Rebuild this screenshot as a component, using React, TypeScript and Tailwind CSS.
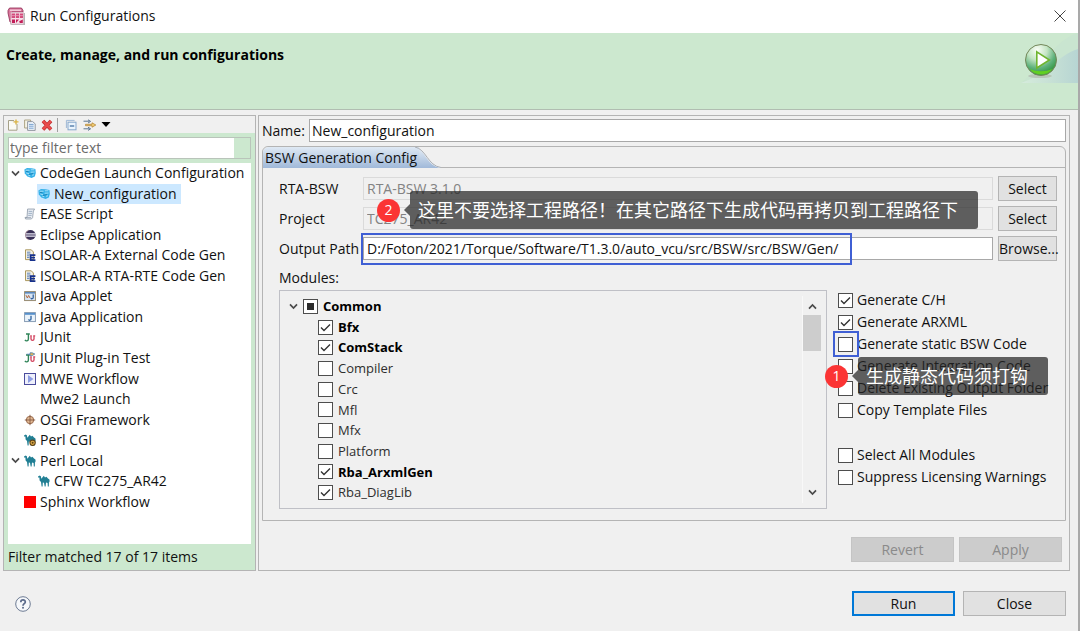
import { useState } from "react";
import type { ReactNode } from "react";
import clsx from "clsx";

function Chevron({ className }: { className?: string }) {
  return (
    <svg viewBox="0 0 9 7" className={clsx("h-[7px] w-[9px] shrink-0", className)}>
      <path d="M1 1.4 4.5 5 8 1.4" fill="none" stroke="#4a4a4a" strokeWidth="1.7" />
    </svg>
  );
}

function AppIcon() {
  return (
    <svg viewBox="0 0 19 19" className="size-[19px]">
      <path d="M3 6V16a2 2 0 0 0 2 2H18V6Z" fill="#b9b2b5" />
      <path d="M1 3.5 2.5 1H14.5L16 3.5V5H5V14L3 15 1 6Z" fill="#d9779c" stroke="#8d2850" strokeWidth="0.8" />
      <path d="M3 2.5H14V4H3Z" fill="#f3c9d8" />
      <rect x="4" y="5.5" width="12.5" height="11.5" fill="#f6dfe8" stroke="#d6b9c5" strokeWidth="0.7" />
      <path d="M4.6 6.6H8V11H4.6ZM8.8 6.6H12V11H8.8ZM12.8 6.6H16V11H12.8Z" fill="#d34b7c" />
      <path d="M4.6 8.6H16" stroke="#eda9c2" strokeWidth="0.7" />
      <path d="M5 12.4H8V16H5ZM9 12.4H12L9 16ZM12.2 14.2 15.8 12.4V16H12.8Z" fill="#c21d57" />
    </svg>
  );
}

function CodeGenIcon() {
  return (
    <svg viewBox="0 0 12 12" className="size-3">
      <path d="M.4 2.6 3 1l4.6.2L11.4 2l.4 4-1 3.6L7.6 11 3.4 9.4.8 6.6Z" fill="#35b1e8" />
      <path d="M1.6 3.2h4M6.8 2.8h3.6M2.2 5.8l2.8 1M6.6 5.2l4-.2M4.4 8.6h1.8M8 8.2l2-.4" fill="none" stroke="#b4e5f9" strokeWidth="0.9" />
      <path d="M5 7.4 9 6.6M2 4.6h2.4" stroke="#1676a9" strokeWidth="0.8" />
    </svg>
  );
}

function ScriptIcon() {
  return (
    <svg viewBox="0 0 12 12" className="size-3">
      <path d="M3.6 1h7L9.4 3 8.6 9.6 7.4 11H1.6L1 9.4h2Z" fill="#e8ecf2" stroke="#8e99a8" strokeWidth="0.8" />
      <path d="M4.6 3.4h3.6M4.4 5.4H8M4.2 7.4h3.4" stroke="#8fa3bd" strokeWidth="0.8" />
      <path d="M1.4 9.6H7" stroke="#8e99a8" strokeWidth="0.7" />
    </svg>
  );
}

function EclipseIcon() {
  return (
    <svg viewBox="0 0 12 12" className="size-3">
      <ellipse cx="6.4" cy="6" rx="5.2" ry="4.9" fill="#3a3158" />
      <path d="M4.6 1.3C.6 2.6.6 9.4 4.6 10.7" fill="none" stroke="#b08a8f" strokeWidth="0.7" />
      <path d="M1.6 4.9h9.8M1.6 7.1h9.8" stroke="#e8e6f2" strokeWidth="1.1" />
    </svg>
  );
}

function IsolarIcon() {
  return (
    <svg viewBox="0 0 12 12" className="size-3">
      <path d="M1.5.8h5.8L9.4 3v7.6H1.5Z" fill="#f4f1e4" stroke="#a38d4e" strokeWidth="0.9" />
      <path d="M3 3.2h3.4M3 5h3.4M3 6.8h2.4M3 8.6h2.4" stroke="#4f79b9" strokeWidth="0.9" />
      <path d="M11.4 6.2H6.6v5h4.8M6.6 8.7h4.4" fill="none" stroke="#16308c" strokeWidth="1.7" />
    </svg>
  );
}

function AppletIcon() {
  return (
    <svg viewBox="0 0 12 12" className="size-3">
      <rect x=".6" y="1.6" width="10.8" height="9" fill="#d7e6f5" stroke="#8f8163" strokeWidth="0.9" />
      <path d="M1 2h10v1.6H1Z" fill="#5b88bd" />
      <path d="M2 5.2 3.4 8 4.6 5.4 6 8" fill="none" stroke="#b7683c" strokeWidth="1" />
      <path d="M9.2 4.6v3c0 1.4-1.8 1.5-2.4.6" fill="none" stroke="#2a5795" strokeWidth="1.2" />
    </svg>
  );
}

function JavaAppIcon() {
  return (
    <svg viewBox="0 0 12 12" className="size-3">
      <rect x=".6" y="1.6" width="10.8" height="9" fill="#eaf3fb" stroke="#7d93ad" strokeWidth="0.9" />
      <path d="M1 2h10v1.8H1Z" fill="#5690cc" />
      <path d="M7 4.8v3.2c0 1.5-2 1.6-2.6.5" fill="none" stroke="#2a5f9e" strokeWidth="1.3" />
    </svg>
  );
}

function JUnitIcon({ plugin = false }: { plugin?: boolean }) {
  return (
    <svg viewBox="0 0 12 12" className="size-3">
      <path d="M2 3h2.4v5c0 2.2-2.6 2.4-3.4.9M3 3h2.8" fill="none" stroke="#2f8458" strokeWidth="1.4" />
      <path d="M7 4.6v3.4c0 1.9 3 1.9 3 0V4.6M6.2 4.8h1.6M9.2 4.8h2" fill="none" stroke="#d2425d" strokeWidth="1.3" />
      {plugin && (
        <path d="M2.6 2.2H6M6 .8h2.2L10.8 2 8.2 3.6H6Z" fill="#e2b552" stroke="#4d7fb6" strokeWidth="0.8" />
      )}
    </svg>
  );
}

function MweIcon() {
  return (
    <svg viewBox="0 0 12 12" className="size-3">
      <rect x=".5" y=".5" width="11" height="11" fill="#eef0fb" stroke="#4a4c9c" />
      <path d="M4 2 9.4 6 4 10Z" fill="#8d9de2" />
    </svg>
  );
}

function OsgiIcon() {
  return (
    <svg viewBox="0 0 12 12" className="size-3">
      <circle cx="6" cy="6" r="3.7" fill="#e6bd96" stroke="#97694c" />
      <path d="M6 .8v10.4M.8 6h10.4" stroke="#8a5f47" strokeWidth="1" />
    </svg>
  );
}

function CamelIcon({ cgi = false }: { cgi?: boolean }) {
  return (
    <svg viewBox="0 0 12 12" className="size-3">
      <path
        d="M0 1.4 1.8.6 3 1.4l.2 2.4 1.4-1.6L5.8.8l1.2 1.6L8.4 1.8 10 3.4l1.4 1.2.4 3-.8-1.4-.2 5.4h-1L9.6 8 8 7.4l-.4 4.2H6.7L6 7.8 4.8 7.4l-.2 4.2h-1L3 7 1.6 5.4 1.4 2.6 0 2.6Z"
        fill="#217f94"
      />
      {cgi && (
        <>
          <circle cx="8.6" cy="8.8" r="2.7" fill="#e0ae48" stroke="#5f4319" strokeWidth="1.1" />
          <circle cx="8.6" cy="8.8" r="1" fill="#5f4319" />
        </>
      )}
    </svg>
  );
}

function RunBanner() {
  return (
    <svg viewBox="0 0 58 50" className="h-[50px] w-[58px]">
      <defs>
        <linearGradient id="sweep" x1="0" x2="1">
          <stop offset="0" stopColor="#d6ecdc" />
          <stop offset="0.55" stopColor="#c6e0d5" />
          <stop offset="1" stopColor="#b7d5d3" />
        </linearGradient>
        <radialGradient id="ball" cx="0.38" cy="0.18" r="0.9">
          <stop offset="0" stopColor="#fbfef8" />
          <stop offset="0.35" stopColor="#c4e5c4" />
          <stop offset="0.65" stopColor="#5fb27c" />
          <stop offset="0.85" stopColor="#3a9a4a" />
          <stop offset="1" stopColor="#5cc327" />
        </radialGradient>
      </defs>
      <path d="M58 0C36 6 22 34 1 50H58Z" fill="#c9e5d0" />
      <path d="M58 16C38 22 30 40 1 50H58Z" fill="url(#sweep)" />
      <ellipse cx="20" cy="43" rx="12" ry="2" fill="#b9c6b9" />
      <circle cx="21" cy="27" r="15.5" fill="url(#ball)" stroke="#74875a" />
      <path d="M10 36c4 7 18 7 22 0-6 3-16 3-22 0Z" fill="#62cf22" />
      <path d="M16.8 18.8 29.4 27 16.8 35Z" fill="#fff" stroke="#6fb52f" strokeWidth="1.6" />
    </svg>
  );
}

const launchItems: { label: string; icon?: ReactNode; open?: boolean; child?: boolean; selected?: boolean }[] = [
  { label: "CodeGen Launch Configuration", icon: <CodeGenIcon />, open: true },
  { label: "New_configuration", icon: <CodeGenIcon />, child: true, selected: true },
  { label: "EASE Script", icon: <ScriptIcon /> },
  { label: "Eclipse Application", icon: <EclipseIcon /> },
  { label: "ISOLAR-A External Code Gen", icon: <IsolarIcon /> },
  { label: "ISOLAR-A RTA-RTE Code Gen", icon: <IsolarIcon /> },
  { label: "Java Applet", icon: <AppletIcon /> },
  { label: "Java Application", icon: <JavaAppIcon /> },
  { label: "JUnit", icon: <JUnitIcon /> },
  { label: "JUnit Plug-in Test", icon: <JUnitIcon plugin /> },
  { label: "MWE Workflow", icon: <MweIcon /> },
  { label: "Mwe2 Launch" },
  { label: "OSGi Framework", icon: <OsgiIcon /> },
  { label: "Perl CGI", icon: <CamelIcon cgi /> },
  { label: "Perl Local", icon: <CamelIcon />, open: true },
  { label: "CFW TC275_AR42", icon: <CamelIcon />, child: true },
  { label: "Sphinx Workflow", icon: <span className="size-3 bg-[#ff0000]" /> },
];

const modules = [
  { label: "Bfx", checked: true, bold: true },
  { label: "ComStack", checked: true, bold: true },
  { label: "Compiler" },
  { label: "Crc" },
  { label: "Mfl" },
  { label: "Mfx" },
  { label: "Platform" },
  { label: "Rba_ArxmlGen", checked: true, bold: true },
  { label: "Rba_DiagLib", checked: true },
];

function CheckBox({ id, checked = false, mixed = false }: { id: string; checked?: boolean; mixed?: boolean }) {
  const [on, setOn] = useState(checked);
  return (
    <span className="grid size-[15px] shrink-0">
      <input
        id={id}
        type="checkbox"
        checked={on}
        onChange={(e) => setOn(e.target.checked)}
        className="col-start-1 row-start-1 size-[15px] appearance-none border border-[#4d4d4d] bg-white"
      />
      <svg viewBox="0 0 15 15" className="pointer-events-none col-start-1 row-start-1 size-[15px]">
        {mixed && <rect x="4" y="4" width="7" height="7" fill="#2b2b2b" />}
        {!mixed && on && <path d="M3 7.5 6 10.5 12 4.5" fill="none" stroke="#333" strokeWidth="1.4" />}
      </svg>
    </span>
  );
}

function Option({ id, label, checked, children }: { id: string; label: string; checked?: boolean; children?: ReactNode }) {
  return (
    <div className="relative flex h-[22px] items-center gap-1 whitespace-nowrap">
      <CheckBox id={id} checked={checked} />
      <label htmlFor={id}>{label}</label>
      {children}
    </div>
  );
}

function Callout({ num, text, className }: { num: number; text: string; className: string }) {
  return (
    <div className={clsx("pointer-events-none absolute z-10 flex items-center", className)}>
      <span className="flex size-[23px] items-center justify-center rounded-full bg-[#fb3434] text-sm text-white">
        {num}
      </span>
      <svg viewBox="0 0 6 12" className="ml-1 h-3 w-[6px]">
        <path d="M6 0V12L0 6Z" fill="#262626" fillOpacity="0.72" />
      </svg>
      <span className="rounded-[3px] bg-[#262626]/72 py-1 pr-5 pl-2 text-lg leading-[30px] whitespace-nowrap text-white">
        {text}
      </span>
    </div>
  );
}

function Toolbar() {
  return (
    <div className="flex h-[17px] items-center bg-[#f0f0f0] pl-[3px]">
      <button aria-label="New" className="mr-[5px]">
        <svg viewBox="0 0 12 12" className="size-3">
          <path d="M1.5 1.5H7M10 5v6.2H1.5V1.5" fill="#fbfbf6" stroke="#a6a188" />
          <path d="M9 .4v5M6.5 2.9h5" stroke="#dbb547" strokeWidth="1.4" />
        </svg>
      </button>
      <button aria-label="Duplicate" className="mr-[5px]">
        <svg viewBox="0 0 12 12" className="size-3">
          <path d="M.6 1h6v8h-6Z" fill="#f5f3e6" stroke="#a69c78" strokeWidth="0.9" />
          <path d="M3.6 2.6h5l2.6 2.2v6.6H3.6Z" fill="#eef4fb" stroke="#8a8f98" strokeWidth="0.9" />
          <path d="M5 5.4h4.6M5 7.2h4.6M5 9.2h4.6" stroke="#6b98c9" strokeWidth="0.9" />
        </svg>
      </button>
      <button aria-label="Delete" className="mr-1">
        <svg viewBox="0 0 12 12" className="size-3">
          <path d="M2 2 10 10.4M10 2 2 10.4" stroke="#b92b2b" strokeWidth="3.6" />
          <path d="M2 2 10 10.4M10 2 2 10.4" stroke="#e94c4c" strokeWidth="2.4" />
        </svg>
      </button>
      <span className="mr-[7px] h-[14px] w-px bg-[#a0a0a0]" />
      <button aria-label="Collapse all" className="mr-[6px]">
        <svg viewBox="0 0 12 12" className="size-3">
          <path d="M1.4 9V1.4H9.6" fill="none" stroke="#9fb9d6" />
          <rect x="3" y="3.2" width="8" height="7.6" fill="#eaf4fd" stroke="#87a7cb" />
          <path d="M4.8 7h4.4" stroke="#36659b" strokeWidth="1.2" />
        </svg>
      </button>
      <button aria-label="Filter" className="mr-1">
        <svg viewBox="0 0 14 12" className="h-3 w-[14px]">
          <path d="M.5 2.2h6M.5 9.8h6" stroke="#5c7590" />
          <path d="M5 .8 7.6 2.4 5 4M5 8.2l2.6 1.6L5 11.4" fill="none" stroke="#5c7590" />
          <path d="M2.5 5.3H9V3.8L12.8 6 9 8.2V6.7H2.5Z" fill="#f3cf74" stroke="#b5883a" strokeWidth="0.8" />
        </svg>
      </button>
      <button aria-label="Filter menu">
        <svg viewBox="0 0 10 5" className="h-[5px] w-[10px]">
          <path d="M.5 0h9L5 5Z" fill="#000" />
        </svg>
      </button>
    </div>
  );
}

function LaunchTree() {
  return (
    <section className="flex w-[253px] shrink-0 flex-col border border-[#b4b4b4] bg-[#cce8cf]">
      <Toolbar />
      <div className="mx-1 mt-1 flex h-[22px] border border-[#b9c4ba] bg-white">
        <input
          aria-label="Filter"
          placeholder="type filter text"
          className="min-w-0 flex-1 px-px placeholder:text-[#6b6b6b]"
        />
        <span className="w-4 bg-[#cce8cf]" />
      </div>
      <ul className="mx-1 mt-1 grid min-h-[349px] auto-rows-fr bg-white">
        {launchItems.map((item) => (
          <li key={item.label} className={clsx("flex items-center", item.child ? "pl-[29px]" : "pl-[3px]")}>
            {!item.child && <span className="w-3">{item.open && <Chevron />}</span>}
            <span
              className={clsx(
                "flex h-5 items-center gap-1 pr-1 pl-px whitespace-nowrap",
                item.selected && "bg-[#cce8ff]"
              )}
            >
              <span className="flex size-3 shrink-0">{item.icon}</span>
              {item.label}
            </span>
          </li>
        ))}
      </ul>
      <div className="mx-1 flex-1 bg-white" />
      <p className="px-1 py-[3px] leading-5">Filter matched 17 of 17 items</p>
    </section>
  );
}

function PathRow({
  id,
  label,
  value,
  button,
  disabled,
  children,
}: {
  id: string;
  label: string;
  value: string;
  button: string;
  disabled?: boolean;
  children?: ReactNode;
}) {
  return (
    <div className="flex h-[25px] items-center">
      <label htmlFor={id} className="w-[84px] shrink-0 whitespace-nowrap">
        {label}
      </label>
      <div className="relative flex flex-1">
        <input
          id={id}
          defaultValue={value}
          disabled={disabled}
          className={clsx(
            "h-[23px] min-w-0 flex-1 border px-[3px]",
            disabled ? "border-[#dadada] text-[#838383]" : "border-[#a8a8a8] bg-white"
          )}
        />
        {children}
      </div>
      <button className="ml-[5px] h-[25px] w-[59px] border border-[#b4b4b4] bg-[#e1e1e1]">{button}</button>
    </div>
  );
}

function ModuleTree() {
  return (
    <div className="flex min-w-0 flex-1 border border-[#bfc0c6] py-[5px]">
      <ul className="grid min-h-[207px] flex-1 auto-rows-fr pl-[9px] text-[13px] text-[#2e2e2e]">
        <li className="flex items-center">
          <Chevron className="mr-[5px]" />
          <CheckBox id="common" mixed />
          <label htmlFor="common" className="ml-[5px] font-bold text-black">
            Common
          </label>
        </li>
        {modules.map((m) => (
          <li key={m.label} className="flex items-center pl-[29px]">
            <CheckBox id={m.label} checked={m.checked} />
            <label htmlFor={m.label} className={clsx("ml-[5px]", m.bold && "font-bold text-black")}>
              {m.label}
            </label>
          </li>
        ))}
      </ul>
      <div className="mr-[5px] flex w-[19px] flex-col items-center border-l border-[#f8f8f8] py-[7px]">
        <Chevron className="rotate-180" />
        <span className="mt-[5px] h-9 w-[18px] bg-[#cdcdcd]" />
        <Chevron className="mt-auto" />
      </div>
    </div>
  );
}

function BswTab() {
  return (
    <div className="mt-1 flex flex-col rounded-t-md border border-[#b4b4b4]">
      <div className="flex h-[21px]">
        <button className="-mr-1 rounded-tl-md bg-linear-to-b from-[#dfe9f4] to-[#a0b9d9] px-[2px]">
          BSW Generation Config
        </button>
        <svg viewBox="0 0 26 21" className="h-[21px] w-[26px]">
          <defs>
            <linearGradient id="tab" x1="0" y1="0" x2="0" y2="1">
              <stop offset="0" stopColor="#dfe9f4" />
              <stop offset="1" stopColor="#a0b9d9" />
            </linearGradient>
          </defs>
          <path d="M4 2C11 7 14 20 26 21H4Z" fill="url(#tab)" />
          <path d="M0 0C11 2 13 19 26 20.5" fill="none" stroke="#a9aeb5" />
        </svg>
        <span className="flex-1 border-b border-[#b4b4b4]" />
      </div>
      <div className="flex flex-col pt-2 pr-2 pb-[11px] pl-4">
        <div className="flex flex-col gap-[5px]">
          <PathRow id="rta-bsw" label="RTA-BSW" value="RTA-BSW 3.1.0" button="Select" disabled />
          <PathRow id="project" label="Project" value="TC275_AR42" button="Select" disabled />
          <PathRow
            id="output"
            label="Output Path"
            value="D:/Foton/2021/Torque/Software/T1.3.0/auto_vcu/src/BSW/src/BSW/Gen/"
            button="Browse..."
          >
            <span className="pointer-events-none absolute -top-1 -left-[2px] h-8 w-[491px] border-2 border-[#3f5fd4]" />
            <Callout
              num={2}
              text="这里不要选择工程路径！在其它路径下生成代码再拷贝到工程路径下"
              className="-top-[46px] left-[14px]"
            />
          </PathRow>
        </div>
        <p className="mt-[7px] mb-[2px] leading-5">Modules:</p>
        <div className="flex gap-[11px]">
          <ModuleTree />
          <div className="-mt-px w-[219px] shrink-0">
            <Option id="gen-ch" label="Generate C/H" checked />
            <Option id="gen-arxml" label="Generate ARXML" checked />
            <Option id="gen-static" label="Generate static BSW Code">
              <span className="pointer-events-none absolute -top-[2px] -left-[5px] size-[26px] border-2 border-[#3f5fd4]" />
            </Option>
            <Option id="gen-integration" label="Generate Integration Code">
              <Callout num={1} text="生成静态代码须打钩" className="top-[2px] -left-[13px]" />
            </Option>
            <Option id="delete-output" label="Delete Existing Output Folder" />
            <Option id="copy-templates" label="Copy Template Files" />
            <div className="mt-[23px]">
              <Option id="select-all" label="Select All Modules" />
              <Option id="suppress" label="Suppress Licensing Warnings" />
            </div>
          </div>
        </div>
      </div>
    </div>
  );
}

export default function App() {
  return (
    <div className="flex min-h-screen flex-col border-r-2 border-[#a9a9a9] bg-[#f0f0f0] font-['Open_Sans','Noto_Sans_CJK_SC',sans-serif] text-sm text-[#111]">
      {/* Title bar */}
      <header className="flex h-[33px] items-center bg-white pr-3 pb-px pl-[7px]">
        <AppIcon />
        <h1 className="ml-1 flex-1">Run Configurations</h1>
        <button aria-label="Close window">
          <svg viewBox="0 0 12 12" className="size-3">
            <path d="M.5.5 11.5 11.5M11.5.5.5 11.5" stroke="#444" />
          </svg>
        </button>
      </header>

      <div className="flex h-[77px] items-start justify-between border-b border-[#b0bdb1] bg-[#cce8cf]">
        <h2 className="pt-3 pl-[6px] font-bold text-black">Create, manage, and run configurations</h2>
        <RunBanner />
      </div>

      {/* Main area */}
      <main className="mt-[5px] flex gap-[2px] pr-2 pl-[3px]">
        <LaunchTree />
        <section className="min-w-0 flex-1 border border-[#b4b4b4] p-[3px]">
          <div className="flex items-center">
            <label htmlFor="name" className="w-[47px] shrink-0">
              Name:
            </label>
            <input
              id="name"
              defaultValue="New_configuration"
              className="h-[23px] min-w-0 flex-1 border border-[#a8a8a8] bg-white px-[2px]"
            />
          </div>
          <BswTab />
          <div className="mt-4 mr-1 mb-[5px] flex justify-end gap-[5px]">
            <button disabled className="h-[25px] w-[103px] border border-[#c4c4c4] bg-[#cccccc] text-[#8a8a8a]">
              Revert
            </button>
            <button disabled className="h-[25px] w-[103px] border border-[#c4c4c4] bg-[#cccccc] text-[#8a8a8a]">
              Apply
            </button>
          </div>
        </section>
      </main>

      <footer className="mt-5 flex items-center justify-between pr-3 pl-[15px]">
        <button aria-label="Help">
          <svg viewBox="0 0 16 16" className="size-4">
            <circle cx="8" cy="8" r="7.3" fill="#f6f8fb" stroke="#6d7b93" />
            <path d="M5.8 6.2C5.8 3.2 10.4 3.3 10.3 6 10.3 7.6 8 7.8 8 9.7" fill="none" stroke="#5b6b8b" strokeWidth="1.7" />
            <circle cx="8" cy="11.8" r="1" fill="#5b6b8b" />
          </svg>
        </button>
        <div className="flex gap-2">
          <button className="h-[25px] w-[103px] border-2 border-[#0078d7] bg-[#e1e1e1]">Run</button>
          <button className="h-[25px] w-[103px] border border-[#b4b4b4] bg-[#e1e1e1]">Close</button>
        </div>
      </footer>
    </div>
  );
}
